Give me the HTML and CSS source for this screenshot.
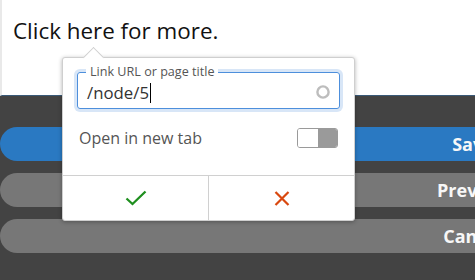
FILE: index.html
```html
<!DOCTYPE html>
<html>
<head>
<meta charset="utf-8">
<link rel="stylesheet" href="styles.css">
</head>
<body>
<div class="page">
  <div class="editor">
    <p class="content">Click here for more.</p>
  </div>
  <div class="toolbar">
    <div class="btn btn-primary">Save</div>
    <div class="btn">Preview</div>
    <div class="btn">Cancel</div>
  </div>
  <div class="popup">
    <div class="arrow"></div>
    <div class="body">
      <div class="field">
        <span class="legend">Link URL or page title</span>
        <div class="value">/node/5<span class="caret"></span></div>
        <svg class="spinner" width="14" height="14" viewBox="0 0 14 14"><circle cx="7" cy="7" r="5.6" fill="none" stroke="#bdbdbd" stroke-width="2.4"/></svg>
      </div>
      <div class="row">
        <span class="row-label">Open in new tab</span>
        <div class="toggle"><span class="toggle-on"></span><span class="toggle-off"></span></div>
      </div>
    </div>
    <div class="actions">
      <div class="action">
        <svg width="22" height="16" viewBox="0 0 22 16"><path d="M1.5 8.5 L7.5 14 L20.5 1.5" fill="none" stroke="#1f8f1f" stroke-width="2.3"/></svg>
      </div>
      <div class="action action-cancel">
        <svg width="16" height="15" viewBox="0 0 16 15"><path d="M1.5 1 L14.5 14 M14.5 1 L1.5 14" fill="none" stroke="#d9480f" stroke-width="2.2"/></svg>
      </div>
    </div>
  </div>
</div>
</body>
</html>
```
FILE: styles.css
```css
html, body {
  margin: 0;
  padding: 0;
}
body {
  width: 475px;
  height: 280px;
  overflow: hidden;
  font-family: "Open Sans", "Noto Sans", sans-serif;
  background: #444444;
}
.page {
  position: relative;
  width: 475px;
  height: 280px;
  overflow: hidden;
}
.editor {
  background: #ffffff;
  border-left: 2px solid #e9e9e9;
  border-bottom: 1px solid #3a5a78;
  box-sizing: border-box;
  height: 96px;
}
.content {
  margin: 0;
  padding: 16px 0 0 11px;
  font-size: 22.4px;
  color: #111111;
  line-height: 30px;
}
.toolbar {
  background: #434343;
  height: 184px;
  padding-top: 31px;
  box-sizing: border-box;
  display: flex;
  flex-direction: column;
  gap: 12px;
}
.btn {
  width: 946px;
  height: 34px;
  border-radius: 17px;
  background: #777777;
  color: #f7f7f7;
  font-weight: 700;
  font-size: 18px;
  line-height: 34px;
  text-align: center;
}
.btn-primary {
  background: #2a79c2;
}
.popup {
  position: absolute;
  left: 62px;
  top: 57px;
  width: 293px;
  height: 164px;
  box-sizing: border-box;
  background: #ffffff;
  border: 1px solid #cfcfcf;
  border-radius: 3px;
  box-shadow: 0 1px 4px rgba(0, 0, 0, 0.3);
  display: flex;
  flex-direction: column;
}
.arrow {
  position: absolute;
  left: 23px;
  top: -8px;
  width: 14px;
  height: 14px;
  background: #ffffff;
  border-left: 1px solid #cfcfcf;
  border-top: 1px solid #cfcfcf;
  transform: rotate(45deg);
}
.body {
  padding: 14px 14px 0 14px;
  height: 117px;
  box-sizing: border-box;
  position: relative;
}
.field {
  position: relative;
  height: 37px;
  box-sizing: border-box;
  border: 1px solid #4d8fdc;
  border-radius: 3px;
  box-shadow: 0 0 0 3px rgba(77, 143, 220, 0.22);
  display: flex;
  align-items: center;
  padding: 0 9px 0 9px;
}
.legend {
  position: absolute;
  left: 8px;
  top: -9px;
  padding: 0 4px;
  background: #ffffff;
  font-size: 12.6px;
  line-height: 16px;
  color: #555555;
}
.value {
  flex: 1;
  font-size: 16.8px;
  color: #333333;
  line-height: 24px;
  padding-top: 4px;
  display: flex;
  align-items: center;
}
.caret {
  display: inline-block;
  width: 1px;
  height: 20px;
  background: #000000;
  margin-left: 1px;
}
.spinner {
  display: block;
  margin-top: 2px;
}
.row {
  display: flex;
  align-items: center;
  justify-content: space-between;
  margin-top: 18px;
  padding-left: 2px;
}
.row-label {
  font-size: 16px;
  color: #555555;
}
.toggle {
  display: flex;
  width: 41px;
  height: 20px;
  margin-right: 2px;
  border-radius: 3px;
  overflow: hidden;
  border: 1px solid #9a9a9a;
  box-sizing: border-box;
}
.toggle-on {
  flex: 1;
  background: #ffffff;
}
.toggle-off {
  flex: 1;
  background: #9a9a9a;
}
.actions {
  flex: 1;
  display: flex;
  border-top: 1px solid #d0d0d0;
}
.action {
  flex: 1;
  display: flex;
  align-items: center;
  justify-content: center;
}
.action-cancel {
  border-left: 1px solid #d0d0d0;
}
```
